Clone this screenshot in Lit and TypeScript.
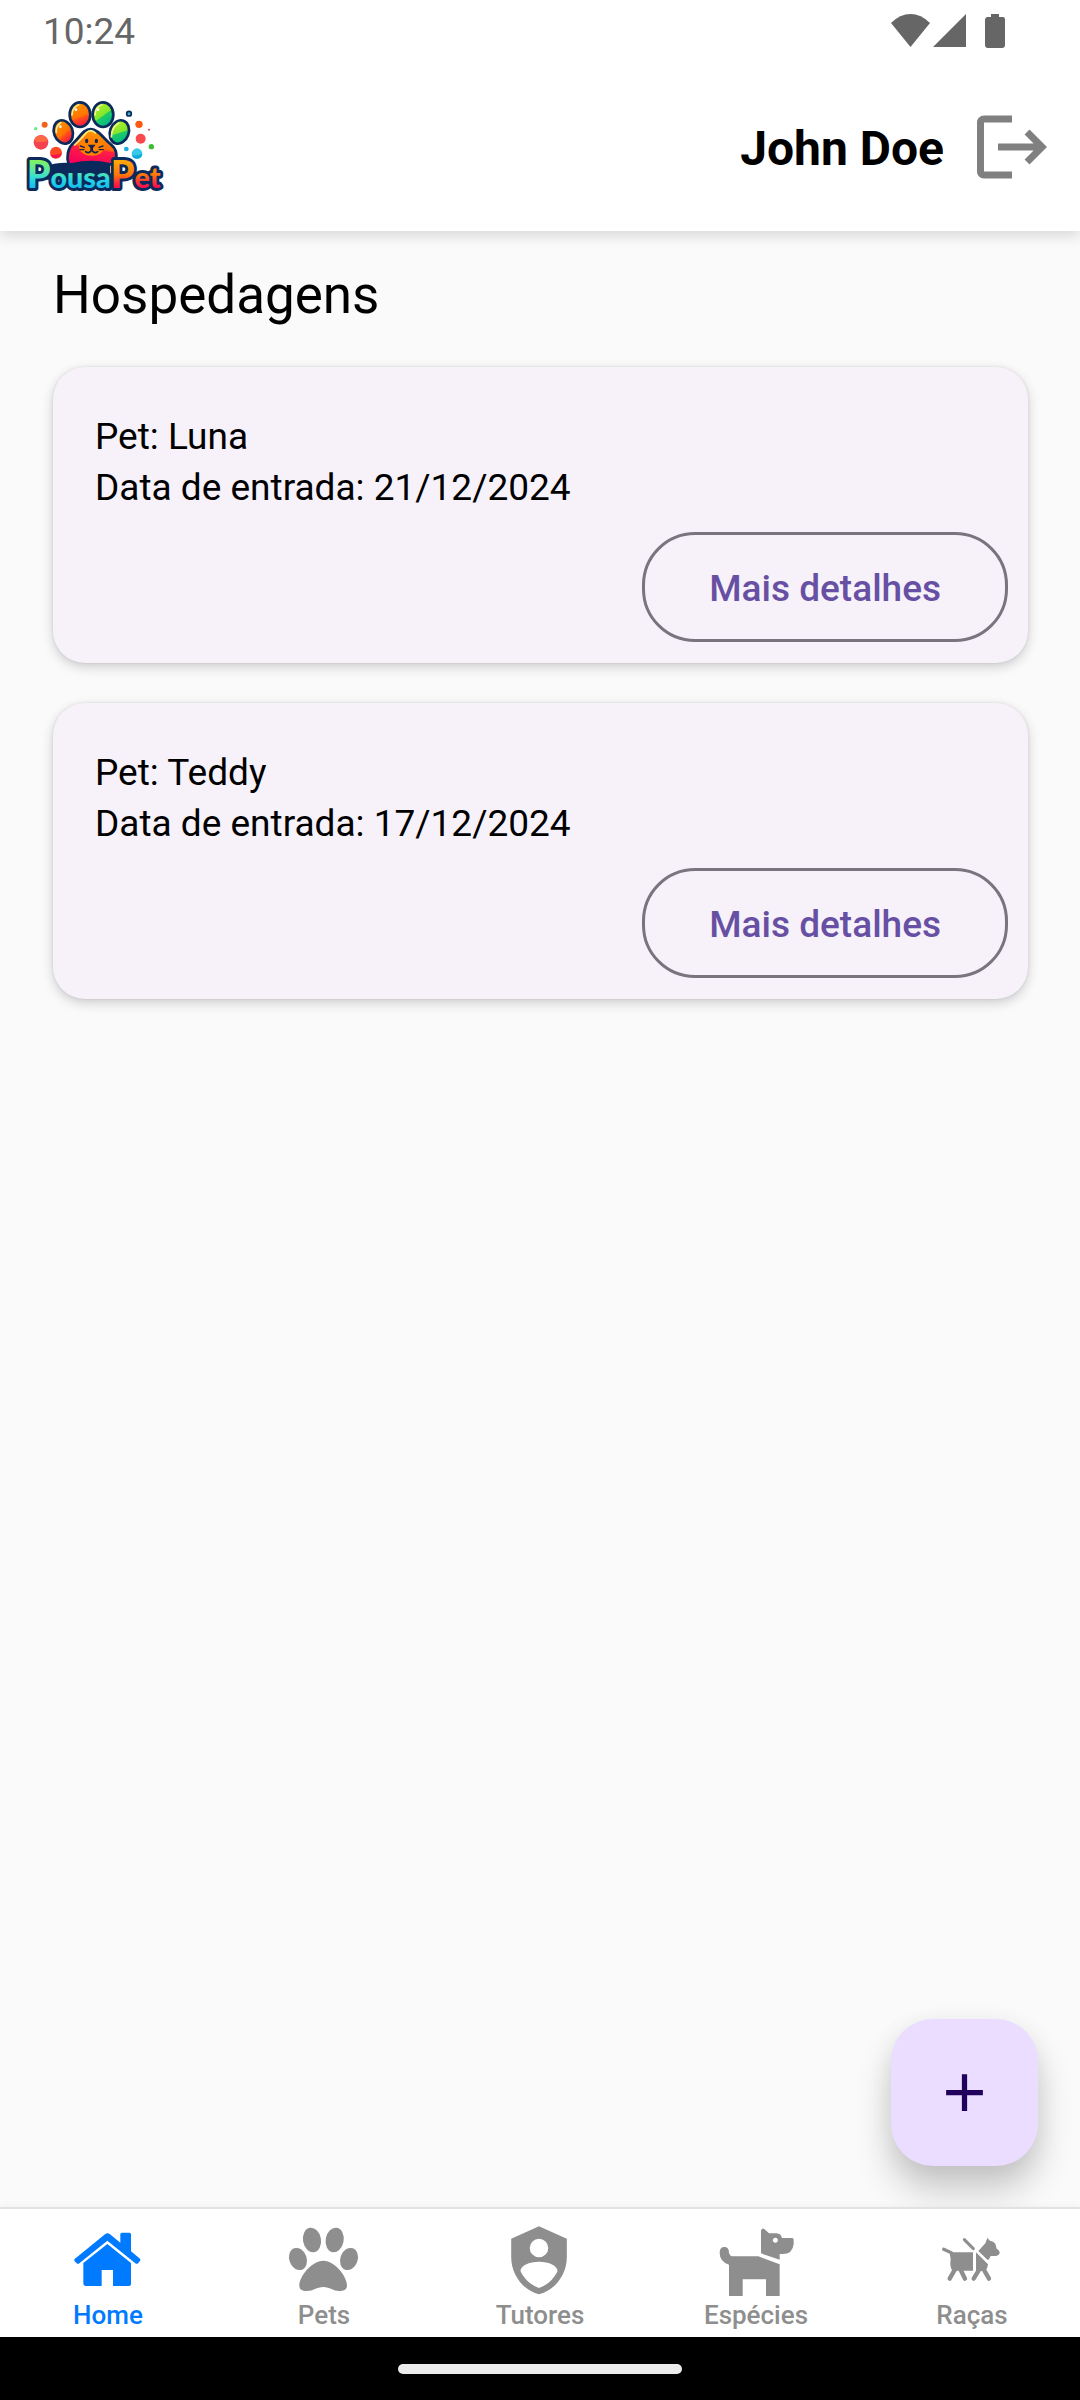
import { LitElement, html, css, svg } from "lit";
import { customElement, property, state } from "lit/decorators.js";
import { classMap } from "lit/directives/class-map.js";

interface Stay {
  pet: string;
  entry: string;
}

interface Tab {
  label: string;
  icon: unknown;
}

const homeIcon = svg`<svg class="icon" viewBox="204 102 240 216" aria-hidden="true">
  <path d="M224 207 315 133Q322 126 330 133L361 158V133q0-5 5-5h22q5 0 5 5V184L420 206q3 4 0 7l-6 7q-4 3-8 0L322 152 238 220q-4 3-8 0l-6-6q-3-4 0-7z"/>
  <path d="M322 162 393 219V282q0 6-6 6H339V240H305V288H258q-8 0-8-8V219z"/>
</svg>`;

const pawIcon = svg`<svg class="icon" viewBox="852 102 240 216" aria-hidden="true">
  <ellipse cx="936" cy="150" rx="27" ry="37" transform="rotate(-10 936 150)"/>
  <ellipse cx="1004" cy="150" rx="27" ry="37" transform="rotate(10 1004 150)"/>
  <ellipse cx="894" cy="207" rx="26" ry="34" transform="rotate(-20 894 207)"/>
  <ellipse cx="1047" cy="207" rx="26" ry="34" transform="rotate(20 1047 207)"/>
  <path d="M970 212c35 0 71 48 71 74 0 14-11 17-23 17-18 0-28-12-48-12s-30 12-50 12c-15 0-22-5-22-17 0-26 37-74 72-74z"/>
</svg>`;

const shieldIcon = svg`<svg class="icon" viewBox="300 102 240 216" aria-hidden="true">
  <path transform="translate(305.8 99.7) scale(9.27)" d="M12 1 3 5v6c0 5.55 3.84 10.74 9 12 5.16-1.26 9-6.45 9-12V5l-9-4m0 4a3 3 0 0 1 3 3 3 3 0 0 1-3 3 3 3 0 0 1-3-3 3 3 0 0 1 3-3m5.13 12A9.69 9.69 0 0 1 12 20.92 9.69 9.69 0 0 1 6.87 17c-.34-.5-.63-1-.87-1.53 0-1.65 2.71-3 6-3s6 1.32 6 3c-.24.53-.53 1.03-.87 1.53z"/>
</svg>`;

const dogIcon = svg`<svg class="icon" viewBox="108 102 240 216" aria-hidden="true">
  <path fill-rule="evenodd" d="M243 190V122Q246 113 253 117L267 130H290Q303 131 306 144H336Q341 144 341 149V162Q338 192 308 192H299V209zM286 143.500a7.500 7.500 0 1 0 .1 0z"/>
  <path d="M119 188Q119 171 133 171T147 188Q149 199 160 199H235L299 223V318H258V268H188V318H147V224Q119 215 119 188z"/>
</svg>`;

const guideDogIcon = svg`<svg class="icon" viewBox="756 102 240 216" aria-hidden="true">
  <path d="M808 182 820 187H879V242H818Q808 234 812 208z"/>
  <path d="M888 187 924 223Q922 238 914 243H888z"/>
  <path d="M895 183 916 160 922 144 930 152Q941 153 946 161L950 176Q960 182 959 190 956 198 948 198H932L927 208 923 210z"/>
  <g fill="none" stroke="currentColor" stroke-linecap="round">
    <path stroke-width="10" d="M791 178 814 188"/>
    <path stroke-width="9" d="M853 149 880 176"/>
    <path stroke-width="13" d="M825 238 809 266M841 238 855 266M898 238 881 266M911 238 927 266"/>
  </g>
</svg>`;

@customElement("pousa-logo")
export class PousaLogo extends LitElement {
  static styles = css`
    :host {
      display: block;
    }
    .art {
      display: block;
      width: 138px;
      height: 92px;
      overflow: visible;
    }
    .word {
      font-family: Lato, Roboto, sans-serif;
      font-weight: 900;
      paint-order: stroke;
      stroke: #0b2a5b;
      stroke-width: 18px;
      stroke-linejoin: round;
    }
    .cap {
      font-size: 114px;
    }
    .low {
      font-size: 86px;
    }
  `;

  render() {
    return html`<svg class="art" viewBox="78 64 414 276" role="img" aria-label="PousaPet">
      <defs>
        <linearGradient id="warm" x1="0" y1="0" x2="0.3" y2="1">
          <stop offset="0" stop-color="#ff9d00" />
          <stop offset="0.65" stop-color="#ff7400" />
          <stop offset="0.75" stop-color="#ff4b1c" />
          <stop offset="1" stop-color="#f8203f" />
        </linearGradient>
        <linearGradient id="lime" x1="0" y1="0" x2="0.6" y2="1">
          <stop offset="0" stop-color="#b6f52a" />
          <stop offset="0.6" stop-color="#84e62c" />
          <stop offset="0.64" stop-color="#1fcb66" />
          <stop offset="1" stop-color="#00b987" />
        </linearGradient>
        <linearGradient id="pad" x1="0.6" y1="0" x2="0.35" y2="1">
          <stop offset="0" stop-color="#ffa000" />
          <stop offset="0.5" stop-color="#ff6d0a" />
          <stop offset="0.56" stop-color="#ff1f45" />
          <stop offset="1" stop-color="#f5005a" />
        </linearGradient>
        <linearGradient id="cool-text" gradientUnits="userSpaceOnUse" x1="0" y1="240" x2="0" y2="330">
          <stop offset="0" stop-color="#84f25c" />
          <stop offset="0.4" stop-color="#56e6ae" />
          <stop offset="0.7" stop-color="#22d3e8" />
          <stop offset="1" stop-color="#12b8f0" />
        </linearGradient>
        <linearGradient id="warm-text" gradientUnits="userSpaceOnUse" x1="0" y1="240" x2="0" y2="330">
          <stop offset="0" stop-color="#ffab08" />
          <stop offset="0.5" stop-color="#ff7808" />
          <stop offset="0.75" stop-color="#ff2f38" />
          <stop offset="1" stop-color="#f6004f" />
        </linearGradient>
      </defs>
      <g stroke="#0b2a5b" stroke-width="8">
        <ellipse cx="240" cy="105" rx="31" ry="37" fill="url(#warm)" />
        <ellipse cx="309" cy="105" rx="31" ry="37" fill="url(#lime)" />
        <ellipse cx="190" cy="157" rx="28" ry="36" fill="url(#warm)" transform="rotate(-20 190 157)" />
        <ellipse cx="358" cy="157" rx="28" ry="36" fill="url(#lime)" transform="rotate(20 358 157)" />
        <path fill="url(#pad)" d="M272 148C294 148 312 178 332 194 350 208 354 228 344 254H206C198 232 204 206 218 192 238 174 250 148 272 148z" />
      </g>
      <g fill="none" stroke="#f6f08a" stroke-width="5" stroke-linecap="round">
        <path d="M216 106Q216 83 236 75" />
        <path d="M285 106Q285 83 305 75" />
        <path d="M169 158Q167 138 182 129" />
        <path d="M334 172Q334 144 356 130" />
        <path d="M224 196Q246 176 258 160 272 146 286 160" />
      </g>
      <g fill="#fff">
        <circle cx="228" cy="90" r="4" />
        <circle cx="294" cy="90" r="4" />
        <circle cx="181" cy="141" r="4" />
      </g>
      <ellipse cx="275" cy="202" rx="38" ry="26" fill="#ff8300" />
      <g fill="#16234d">
        <ellipse cx="260" cy="184" rx="5" ry="7" />
        <ellipse cx="289" cy="184" rx="5" ry="7" />
        <path d="M263 195H287L279 205V211H271V205z" />
      </g>
      <g fill="none" stroke="#16234d" stroke-width="5" stroke-linecap="round">
        <path d="M257 216Q266 224 275 211 284 224 293 216" />
        <path stroke-width="4" d="M241 199 253 203M240 210 252 210M309 199 297 203M310 210 298 210" />
      </g>
      <circle cx="123" cy="188" r="22" fill="#f6414f" />
      <path fill="#fb6a45" d="M102 184a22 22 0 0 1 42-2q-14 10-42 2z" />
      <circle cx="168" cy="219" r="18" fill="#fb4a25" />
      <path fill="#f5124a" d="M151 225q18 4 34-4a18 18 0 0 1-34 4z" />
      <circle cx="134" cy="135" r="9" fill="#f4611f" />
      <circle cx="107" cy="147" r="5" fill="#63ec76" />
      <circle cx="417" cy="134" r="11" fill="#fb5a12" />
      <circle cx="422" cy="177" r="15" fill="#f94a4c" />
      <circle cx="447" cy="150" r="3" fill="#c05050" />
      <circle cx="454" cy="201" r="8" fill="#3dbb35" />
      <circle cx="379" cy="208" r="7" fill="#18aede" />
      <circle cx="411" cy="222" r="16" fill="#38c9e8" />
      <path fill="#0fa8d8" d="M396 226q16 4 31-4a16 16 0 0 1-31 4z" />
      <circle cx="387" cy="102" r="7" fill="#49a8c9" stroke="#0b2a5b" stroke-width="5" />
      <path fill="#0b2a5b" d="M130 262Q170 246 216 250 274 236 330 250V300H130z" />
      <text class="word" x="80" y="326"><tspan class="cap" fill="url(#cool-text)">P</tspan><tspan class="low" fill="url(#cool-text)">ousa</tspan><tspan class="cap" fill="url(#warm-text)">P</tspan><tspan class="low" fill="url(#warm-text)">et</tspan></text>
    </svg>`;
  }
}

@customElement("stay-card")
export class StayCard extends LitElement {
  @property() pet = "";
  @property() entry = "";

  static styles = css`
    :host {
      display: block;
    }
    .card {
      display: flex;
      flex-direction: column;
      padding: 44px 20px 21px 42px;
      border-radius: 32px;
      background: #f7f2fa;
      box-shadow: 0 4px 12px rgba(0, 0, 0, 0.18), 0 0 3px rgba(0, 0, 0, 0.1);
    }
    .line {
      margin: 0;
      font-size: 37px;
      line-height: 51px;
      color: #000;
    }
    .more {
      align-self: flex-end;
      box-sizing: border-box;
      height: 110px;
      margin-top: 19px;
      padding: 4px 64px 0;
      border: 3px solid #79747e;
      border-radius: 53px;
      background: transparent;
      font: 500 37px/52px Roboto, sans-serif;
      color: #6750a4;
      cursor: pointer;
    }
  `;

  render() {
    return html`<article class="card">
      <p class="line">Pet: ${this.pet}</p>
      <p class="line">Data de entrada: ${this.entry}</p>
      <button class="more" type="button">Mais detalhes</button>
    </article>`;
  }
}

@customElement("app-root")
export class AppRoot extends LitElement {
  @state() private active = "Home";

  private stays: Stay[] = [
    { pet: "Luna", entry: "21/12/2024" },
    { pet: "Teddy", entry: "17/12/2024" },
  ];

  private tabs: Tab[] = [
    { label: "Home", icon: homeIcon },
    { label: "Pets", icon: pawIcon },
    { label: "Tutores", icon: shieldIcon },
    { label: "Espécies", icon: dogIcon },
    { label: "Raças", icon: guideDogIcon },
  ];

  static styles = css`
    :host {
      display: flex;
      flex-direction: column;
      min-height: 100vh;
      background: #fafafa;
      font-family: Roboto, sans-serif;
      color: #000;
    }
    .top {
      position: relative;
      z-index: 1;
      background: #fff;
      box-shadow: 0 4px 14px rgba(0, 0, 0, 0.15);
    }
    .status {
      display: flex;
      align-items: center;
      justify-content: space-between;
      height: 62px;
      padding: 0 74px 0 43px;
      font-size: 37px;
      color: #666;
    }
    .signals {
      display: block;
      width: 116px;
      height: 36px;
      fill: currentColor;
    }
    .bar {
      display: flex;
      align-items: center;
      height: 169px;
      padding: 0 26px;
    }
    .user {
      margin-left: auto;
      padding-top: 4px;
      font-size: 48px;
      font-weight: 700;
    }
    .logout {
      display: block;
      margin-left: 26px;
      padding: 0;
      border: 0;
      background: none;
      color: #808080;
      cursor: pointer;
    }
    .logout-icon {
      display: block;
      width: 84px;
      height: 84px;
      fill: currentColor;
    }
    .main {
      position: relative;
      flex: 1;
      padding: 32px 52px 40px 53px;
    }
    .title {
      margin: 0 0 40px;
      font-size: 53px;
      font-weight: 400;
      line-height: 64px;
    }
    .list {
      display: flex;
      flex-direction: column;
      gap: 40px;
    }
    .fab {
      position: absolute;
      right: 42px;
      bottom: 41px;
      display: grid;
      place-items: center;
      width: 147px;
      height: 147px;
      padding: 0;
      border: 0;
      border-radius: 42px;
      background: #eaddff;
      color: #21005d;
      box-shadow: 0 24px 36px rgba(0, 0, 0, 0.2), 0 4px 24px rgba(0, 0, 0, 0.06);
      cursor: pointer;
    }
    .plus {
      display: block;
      width: 63px;
      height: 63px;
      fill: currentColor;
    }
    .tabs {
      position: relative;
      z-index: 1;
      display: grid;
      grid-template-columns: repeat(5, 1fr);
      border-top: 2px solid #e2e2e2;
      background: #fff;
      box-shadow: 0 0 8px rgba(0, 0, 0, 0.05);
    }
    .tab {
      display: flex;
      flex-direction: column;
      align-items: center;
      gap: 3px;
      padding: 15px 0 6px;
      color: #8e8e8f;
      font-size: 26px;
      font-weight: 500;
      line-height: 32px;
      text-decoration: none;
    }
    .tab.active {
      color: #007aff;
    }
    .icon {
      display: block;
      width: 80px;
      height: 72px;
      fill: currentColor;
    }
    .gesture {
      position: relative;
      z-index: 1;
      display: flex;
      align-items: center;
      justify-content: center;
      height: 63px;
      background: #000;
    }
    .handle {
      width: 284px;
      height: 10px;
      border-radius: 5px;
      background: #ececec;
    }
  `;

  render() {
    return html`
      <header class="top">
        <div class="status">
          <time>10:24</time>
          <svg class="signals" viewBox="890 13 116 36" aria-hidden="true">
            <path d="M891 23Q900 14 910.500 14T930 23L910.500 47z" />
            <path d="M966 14V47H933z" />
            <path d="M991 17V14H999V17H1003Q1005 17 1005 20V45Q1005 48 1002 48H988Q985 48 985 45V20Q985 17 988 17z" />
          </svg>
        </div>
        <div class="bar">
          <pousa-logo></pousa-logo>
          <span class="user">John Doe</span>
          <button class="logout" type="button" aria-label="Sair">
            <svg class="logout-icon" viewBox="0 0 24 24" aria-hidden="true">
              <path d="M17 7l-1.410 1.410L18.170 11H8v2h10.170l-2.580 2.580L17 17l5-5M4 5h8V3H4c-1.100 0-2 .9-2 2v14c0 1.100.9 2 2 2h8v-2H4V5z" />
            </svg>
          </button>
        </div>
      </header>
      <main class="main">
        <h1 class="title">Hospedagens</h1>
        <div class="list">
          ${this.stays.map((s) => html`<stay-card .pet=${s.pet} .entry=${s.entry}></stay-card>`)}
        </div>
        <button class="fab" type="button" aria-label="Adicionar">
          <svg class="plus" viewBox="0 0 24 24" aria-hidden="true"><path d="M19 13h-6v6h-2v-6H5v-2h6V5h2v6h6v2z" /></svg>
        </button>
      </main>
      <nav class="tabs">
        ${this.tabs.map(
          (t) => html`<a
            class=${classMap({ tab: true, active: t.label === this.active })}
            href="#${t.label}"
            @click=${() => (this.active = t.label)}
            >${t.icon}<span>${t.label}</span></a
          >`
        )}
      </nav>
      <div class="gesture"><div class="handle"></div></div>
    `;
  }
}
